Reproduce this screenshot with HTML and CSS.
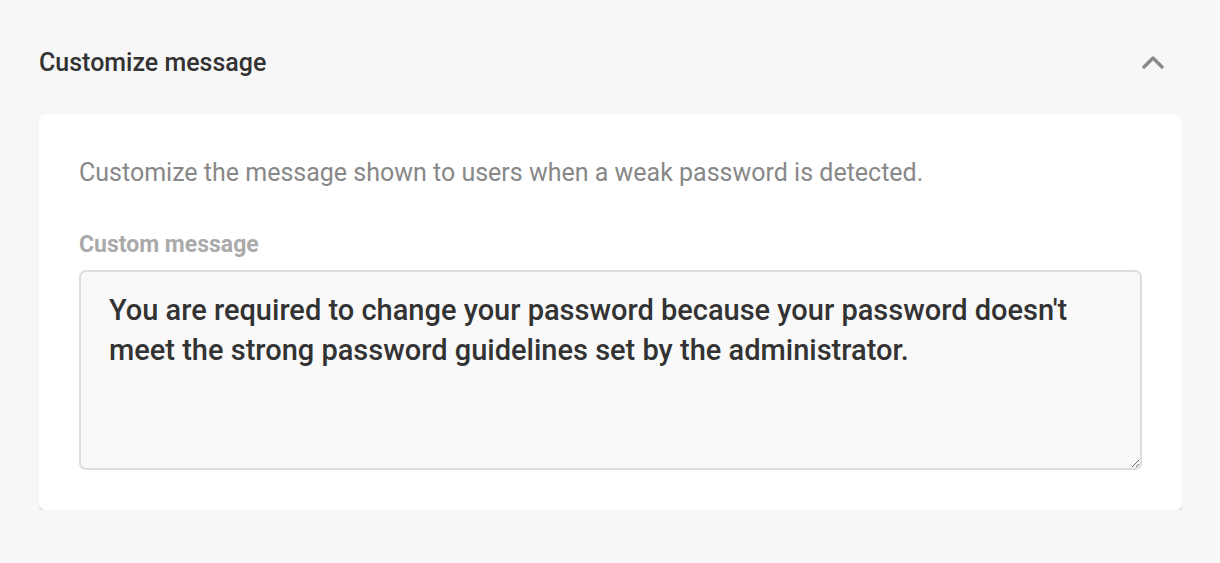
FILE: index.html
```html
<!DOCTYPE html>
<html lang="en">
<head>
<meta charset="utf-8">
<title>Customize message</title>
<link rel="stylesheet" href="styles.css">
</head>
<body>
<section class="panel">
  <header class="panel-header">
    <h2 class="panel-title">Customize message</h2>
    <button class="toggle" aria-label="Collapse">
      <svg width="22" height="14" viewBox="0 0 22 14"><path d="M2 12 L11 3 L20 12" fill="none" stroke="#8a8a8a" stroke-width="3.4" stroke-linecap="round" stroke-linejoin="round"/></svg>
    </button>
  </header>
  <div class="card">
    <p class="desc">Customize the message shown to users when a weak password is detected.</p>
    <label class="field-label" for="msg">Custom message</label>
    <textarea id="msg" class="field">You are required to change your password because your password doesn't meet the strong password guidelines set by the administrator.</textarea>
  </div>
</section>
</body>
</html>
```

FILE: styles.css
```css
html, body {
  margin: 0;
  padding: 0;
  background: #f7f7f7;
  font-family: Roboto, "Liberation Sans", sans-serif;
}
.panel {
  padding: 0 38px 0 39px;
}
.panel-header {
  display: flex;
  align-items: center;
  justify-content: space-between;
  height: 114px;
  padding-top: 10px;
  box-sizing: border-box;
}
.panel-title {
  margin: 0;
  font-size: 25px;
  font-weight: 500;
  color: #333;
}
.toggle {
  border: 0;
  background: none;
  padding: 0;
  margin-right: 18px;
  width: 22px;
  height: 14px;
  display: flex;
}
.card {
  background: #fff;
  border-radius: 7px;
  box-shadow: 0 3px 0 #e2e2e2;
  padding: 45px 40px 40px 40px;
  display: flex;
  flex-direction: column;
}
.desc {
  margin: 0 0 44px;
  font-size: 25px;
  line-height: 28px;
  color: #888;
}
.field-label {
  font-size: 23px;
  font-weight: 700;
  color: #aaa;
  line-height: 28px;
  margin-bottom: 11px;
}
.field {
  height: 200px;
  box-sizing: border-box;
  border: 2px solid #ddd;
  border-radius: 7px;
  background: #f9f9f9;
  padding: 18px 28px;
  font-family: Roboto, "Liberation Sans", sans-serif;
  font-size: 29px;
  font-weight: 500;
  line-height: 40px;
  color: #333;
  resize: vertical;
  outline: none;
}
```
